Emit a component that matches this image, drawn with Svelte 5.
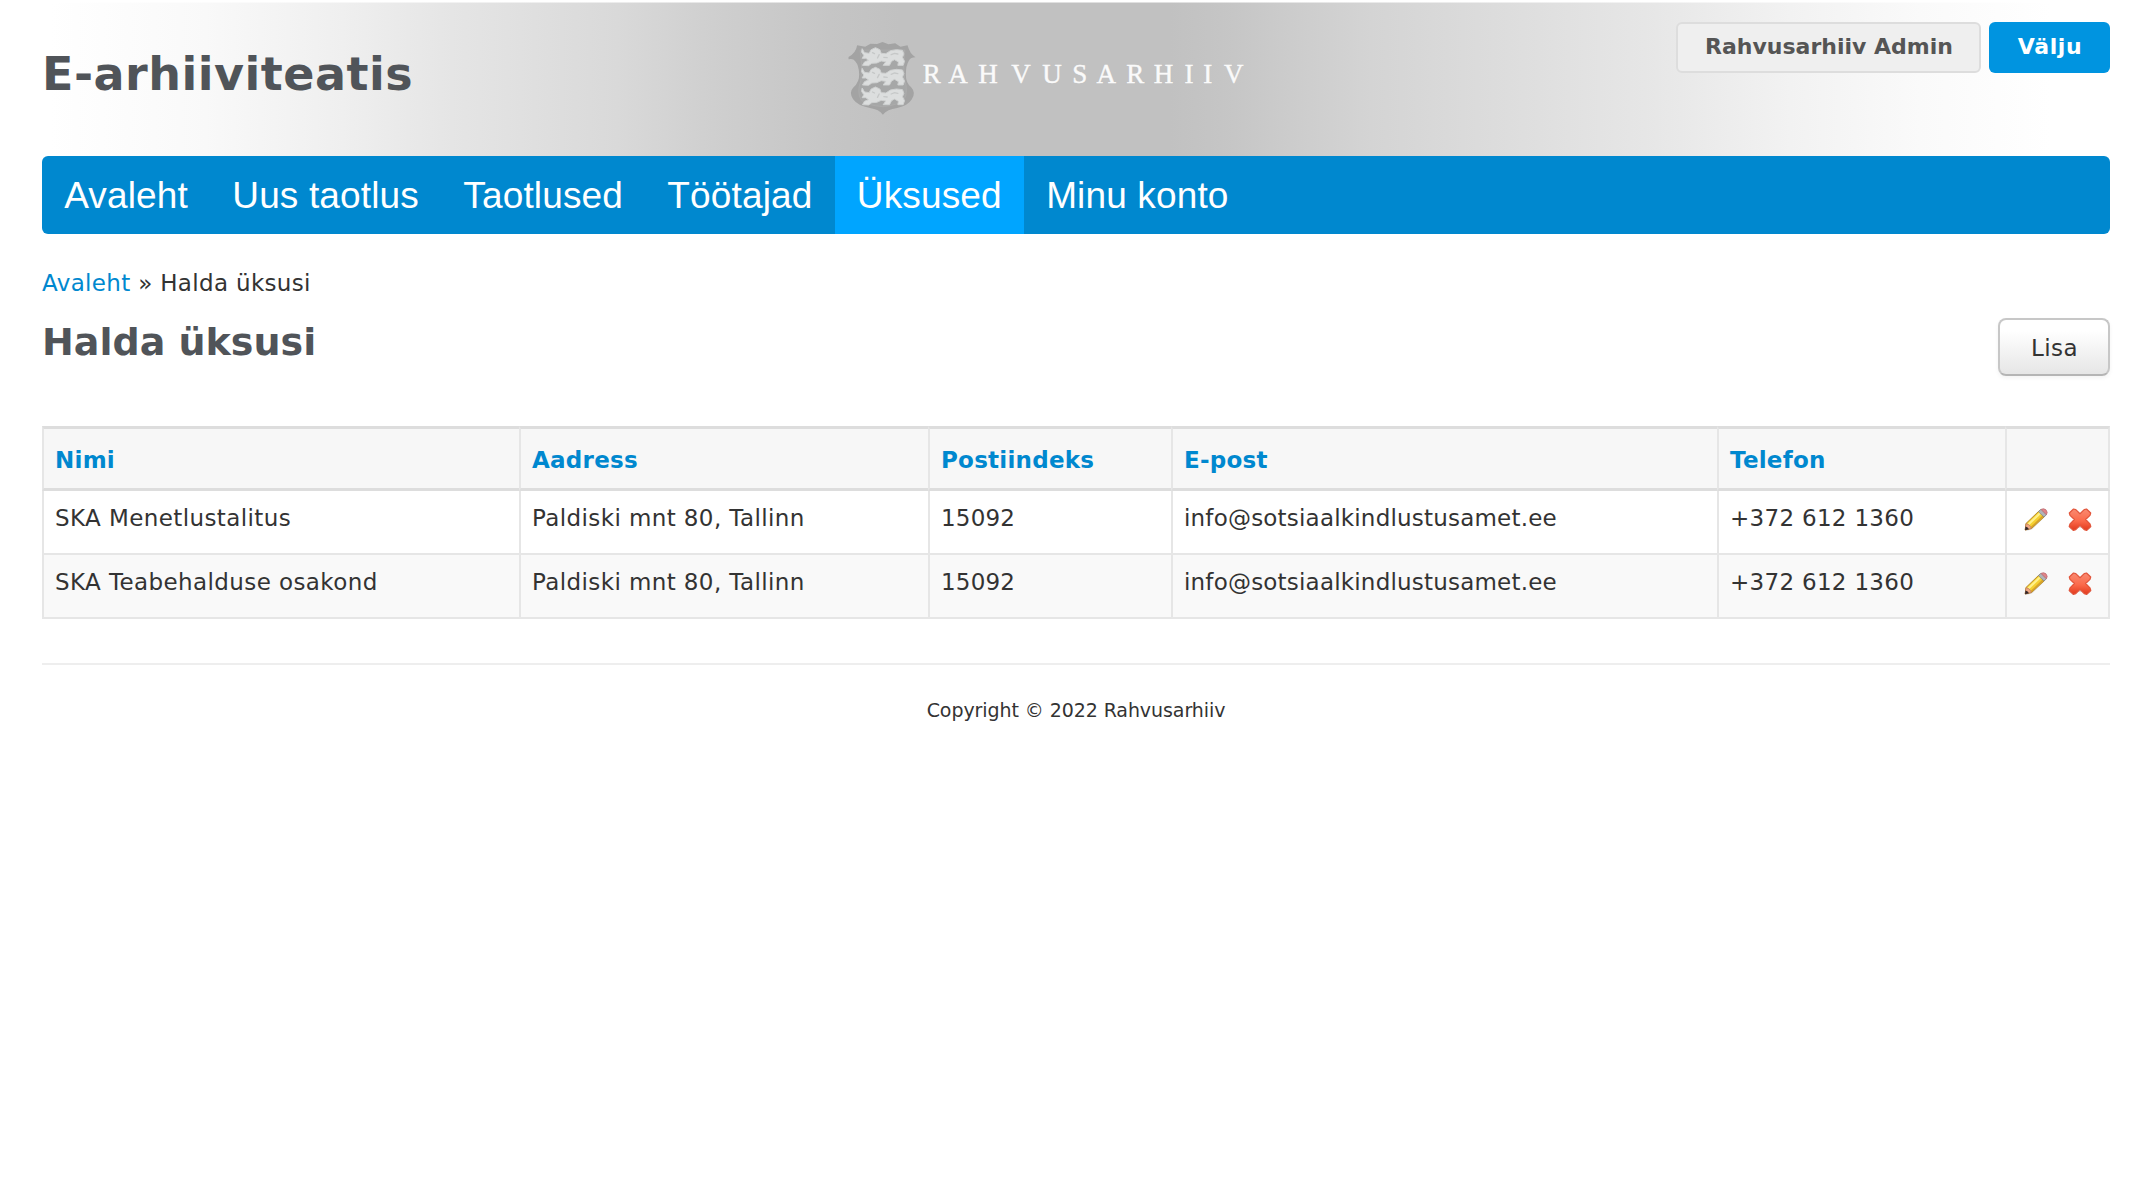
<script>
  const nav = ['Avaleht', 'Uus taotlus', 'Taotlused', 'Töötajad', 'Üksused', 'Minu konto'];
  const active = 'Üksused';
  const columns = ['Nimi', 'Aadress', 'Postiindeks', 'E-post', 'Telefon'];
  const units = ['SKA Menetlustalitus', 'SKA Teabehalduse osakond'].map((name) => ({
    name,
    address: 'Paldiski mnt 80, Tallinn',
    zip: '15092',
    email: 'info@sotsiaalkindlustusamet.ee',
    phone: '+372 612 1360'
  }));
</script>

{#snippet lion(y)}
  <g transform="translate(0 {y})">
    <path d="M53 38 L60 50 L74 52 L80 41 L93 35 L106 41 L110 52 L124 53 L138 44 L156 41 L174 43 L178 54 L174 64 L180 76 L176 88 L160 88 L162 78 L150 71 L141 76 L135 88 L116 88 L124 77 L110 75 L97 81 L82 82 L72 89 L54 88 L60 78 L72 73 L64 67 L53 67 L58 58 L51 48 Z" fill="#dcdede" stroke="#cfd1d1" stroke-width="3" stroke-linejoin="round" />
    <path d="M84 50 L90 53 M104 56 L99 66 M140 56 L150 52 L160 54 M118 64 L128 65" fill="none" stroke="#c6c8c8" stroke-width="4" stroke-linecap="round" />
  </g>
{/snippet}

<header>
  <div class="top">
    <div class="title">E-arhiiviteatis</div>
    <svg class="logo" width="400" height="80" viewBox="0 0 400 80">
      <g transform="translate(.5 1) scale(.33333) translate(-12 -12)">
        <path d="M12 63 Q34 52 38 28 L62 32 L78 23 L98 24 L114 18 L132 25 L152 22 L168 32 L189 28 Q196 54 213 64 Q199 64 193 74 Q184 88 184 116 Q184 140 200 154 Q215 170 202 190 Q190 210 158 216 Q128 220 115 236 Q104 220 76 216 Q40 210 26 190 Q12 170 27 154 Q45 138 44 114 Q43 88 32 76 Q26 66 12 70 Z" fill="#a3a3a3" />
        <path d="M47 42 L181 42 Q174 90 181 134 Q192 168 178 192 Q160 208 115 212 Q66 208 50 192 Q36 168 49 134 Q55 90 47 42 Z" fill="#a6a7a7" stroke="#afafaf" stroke-width="2" />
        {@render lion(0)}
        {@render lion(59)}
        {@render lion(118)}
      </g>
      <text x="74.7 100.2 130.2 163.2 194.2 224.3 248.5 278.2 305.8 336.6 355.3 376" y="44">RAHVUSARHIIV</text>
    </svg>
    <div class="account">
      <button class="user">Rahvusarhiiv Admin</button>
      <button class="exit">Välju</button>
    </div>
  </div>
  <nav>
    {#each nav as item}
      <a href="#top" class:active={item === active}>{item}</a>
    {/each}
  </nav>
</header>

<main>
  <div class="crumbs"><a href="#top">Avaleht</a> » <span>Halda üksusi</span></div>
  <div class="heading">
    <h1>Halda üksusi</h1>
    <button class="add">Lisa</button>
  </div>

  <table>
    <colgroup><col class="c1" /><col class="c2" /><col class="c3" /><col class="c4" /><col class="c5" /><col class="c6" /></colgroup>
    <thead>
      <tr>
        {#each columns as c}<th>{c}</th>{/each}
        <th></th>
      </tr>
    </thead>
    <tbody>
      {#each units as u}
        <tr>
          <td class="name">{u.name}</td>
          <td class="address">{u.address}</td>
          <td>{u.zip}</td>
          <td>{u.email}</td>
          <td class="phone">{u.phone}</td>
          <td class="actions">
            <div>
              <svg width="24" height="24" viewBox="0 0 24 24">
                <path d="M1 21.5 L3 22.8 L8 21.5 L23 7 L22 5.5 L7 19.5 Z" fill="#000" opacity=".12" />
                <path d="M1.2 22 L2 15.5 L15.5 2.5 L21 8 L7.5 20.5 Z" fill="#f5cf30" stroke="#b58a2c" stroke-width="1" />
                <path d="M3.6 15.8 L15.8 4 L17.4 5.5 L5.2 17.2 Z" fill="#fff08a" />
                <path d="M6.6 19 L19 7 L20.2 8.2 L7.8 19.9 Z" fill="#d6a12a" />
                <path d="M1.2 22 L2 15.6 Q5.8 16 7.5 20.4 Z" fill="#f0a784" stroke="#b5744d" stroke-width=".6" />
                <path d="M1 22.3 L1.5 18.6 Q4 19.2 5 21.3 Z" fill="#33272b" />
                <path d="M14.4 3.6 L17 1.2 L22.4 6.6 L20 9 Z" fill="#b0b4b8" stroke="#85898d" stroke-width=".8" />
                <path d="M17 1.4 Q19.5 -.2 22 1.8 Q24.2 4.4 22.4 6.8 Z" fill="#e08488" stroke="#b9696e" stroke-width=".7" />
              </svg>
              <svg width="24" height="24" viewBox="0 0 24 24">
                <defs>
                  <linearGradient id="cross" x1="0" y1="0" x2="0" y2="1">
                    <stop offset="0" stop-color="#f98b72" />
                    <stop offset=".55" stop-color="#fb6a4b" />
                    <stop offset="1" stop-color="#e2391c" />
                  </linearGradient>
                </defs>
                <path d="M5 23 L9 20 H15 L19 23 L23 19.5 L21 18 H3 L1 19.5 Z" fill="#000" opacity=".12" />
                <path d="M5.5 1 L1.3 5 L2 7.4 L6.4 11.5 L2 16 L1.2 18.5 L5.3 22.4 L7.8 21.6 L12 17.4 L16.2 21.6 L18.7 22.4 L22.8 18.5 L22 16 L17.6 11.5 L22 7.4 L22.7 5 L18.5 1 L16.2 1.6 L12 5.7 L7.8 1.6 Z" fill="url(#cross)" stroke="#e2553b" stroke-width="1.2" stroke-linejoin="round" />
              </svg>
            </div>
          </td>
        </tr>
      {/each}
    </tbody>
  </table>

  <footer>Copyright © 2022 Rahvusarhiiv</footer>
</main>

<style>
  :global(body) {
    background: #fff;
    color: #333;
    font: 23px/36px 'DejaVu Sans', Verdana, sans-serif;
  }
  header {
    padding: 0 40px 0 42px;
    height: 234px;
  }
  header::before {
    content: '';
    display: block;
    height: 2px;
  }
  .top {
    display: grid;
    grid-template-columns: 806px 1fr auto;
    align-items: start;
    height: 154px;
    box-sizing: border-box;
    margin: 0 -40px 0 -42px;
    padding: 0 40px 0 42px;
    box-shadow: inset 0 1px 0 rgba(255, 255, 255, 0.5);
    background: linear-gradient(90deg, #fff 50px, #f9f9f9 206px, #efefef 343px, #e5e5e5 452px, #d9d9d9 617px, #cfcfcf 713px, #c5c5c5 830px, #c1c1c1 900px, #c1c1c1 1170px, #c6c6c6 1234px, #cccccc 1290px, #d4d4d4 1371px, #dddddd 1508px, #e6e6e6 1645px, #f2f2f2 1790px, #fafafa 1920px, #fff 2050px);
  }
  .title {
    margin: 42px 0 0;
    font-size: 46px;
    line-height: 60px;
    font-weight: bold;
    letter-spacing: 0.5px;
    color: #505459;
  }
  .logo {
    margin-top: 37px;
  }
  .logo text {
    font: 27px 'Liberation Serif', serif;
    fill: #fff;
    stroke: #fff;
    stroke-width: 0.4px;
    opacity: 0.93;
  }
  .account {
    display: flex;
    gap: 8px;
    padding-top: 20px;
  }
  button {
    box-sizing: border-box;
    margin: 0;
    padding: 0;
    font-family: inherit;
  }
  .account button {
    height: 51px;
    border-radius: 6px;
    font-size: 22px;
    font-weight: bold;
    line-height: 24px;
    padding: 0 0 1px 1px;
  }
  .user {
    width: 305px;
    border: 2px solid #ddd;
    background: #efefef;
    color: #555;
  }
  .exit {
    width: 121px;
    border: 0;
    background: #0094e0;
    color: #fff;
    letter-spacing: 0.6px;
  }
  nav {
    display: flex;
    height: 78px;
    border-radius: 6px;
    background: #0088cf;
  }
  nav a {
    box-sizing: border-box;
    height: 78px;
    padding: 1px 22.2px 0;
    font: 37px/78px 'Liberation Sans', Arial, sans-serif;
    letter-spacing: 0.14px;
    color: #fff;
    text-decoration: none;
    white-space: nowrap;
  }
  nav a.active {
    background: #00a5ff;
  }
  main {
    padding: 31px 40px 0 42px;
  }
  .crumbs {
    height: 53px;
    letter-spacing: 0.33px;
  }
  .crumbs a {
    color: #0088cf;
    text-decoration: none;
  }
  .heading {
    display: flex;
    justify-content: space-between;
    height: 108px;
  }
  h1 {
    margin: -1px 0 0;
    font-size: 38px;
    line-height: 50px;
    color: #505459;
  }
  .add {
    width: 112px;
    height: 58px;
    padding: 1px 0 0 1px;
    border: 2px solid #c7c7c7;
    border-bottom-color: #b5b5b5;
    border-radius: 8px;
    background: linear-gradient(#fff 20%, #e6e6e6);
    box-shadow: 0 2px 4px rgba(0, 0, 0, 0.05);
    font-size: 23px;
    color: #333;
    letter-spacing: 0.4px;
  }
  table {
    width: 2068px;
    table-layout: fixed;
    border-collapse: separate;
    border-spacing: 0;
  }
  .c1 { width: 477px; }
  .c2 { width: 409px; }
  .c3 { width: 243px; }
  .c4 { width: 546px; }
  .c5 { width: 288px; }
  .c6 { width: 105px; }
  th, td {
    box-sizing: border-box;
    border-left: 2px solid #e6e6e6;
    padding: 9px 0 0 11px;
    text-align: left;
    vertical-align: top;
    white-space: nowrap;
  }
  th:last-child, td:last-child {
    border-right: 2px solid #e6e6e6;
  }
  th {
    height: 65px;
    padding-top: 13px;
    border-top: 3px solid #ddd;
    border-bottom: 3px solid #ddd;
    background: #f7f7f7;
    color: #0088cf;
    letter-spacing: 0.25px;
  }
  td {
    height: 64px;
    border-bottom: 2px solid #e6e6e6;
    letter-spacing: 0.2px;
  }
  td.name {
    letter-spacing: 0.4px;
  }
  td.address {
    letter-spacing: 0.4px;
  }
  td.phone {
    letter-spacing: 0.3px;
  }
  tbody tr:nth-child(2) td {
    background: #f9f9f9;
  }
  .actions div {
    display: flex;
    gap: 20px;
    padding: 8px 0 0 6px;
  }
  footer {
    margin-top: 44px;
    padding-top: 27px;
    border-top: 2px solid #eee;
    font-size: 19px;
    text-align: center;
    letter-spacing: -0.08px;
  }
</style>
